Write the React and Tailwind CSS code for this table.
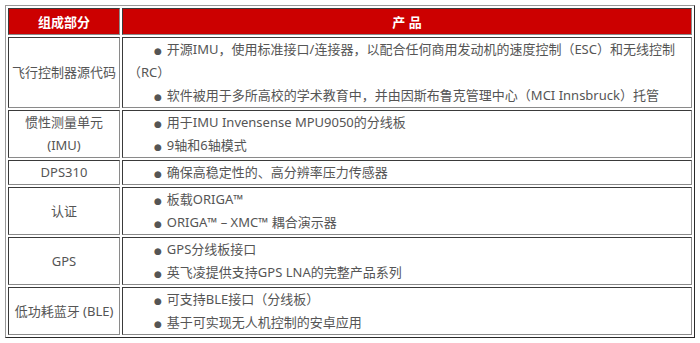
import React from 'react';

const rows = [
  {
    name: ['飞行控制器源代码'],
    h: 'h-[70px]',
    items: [
      ['开源IMU，使用标准接口/连接器，以配合任何商用发动机的速度控制（ESC）和无线控制', '（RC）'],
      ['软件被用于多所高校的学术教育中，并由因斯布鲁克管理中心（MCI Innsbruck）托管'],
    ],
  },
  {
    name: ['惯性测量单元', '(IMU)'],
    h: 'h-[47px]',
    items: [['用于IMU Invensense MPU9050的分线板'], ['9轴和6轴模式']],
  },
  {
    name: ['DPS310'],
    h: 'h-[25px]',
    items: [['确保高稳定性的、高分辨率压力传感器']],
  },
  {
    name: ['认证'],
    h: 'h-[47px]',
    items: [['板载ORIGA™'], ['ORIGA™ – XMC™ 耦合演示器']],
  },
  {
    name: ['GPS'],
    h: 'h-[48px]',
    items: [['GPS分线板接口'], ['英飞凌提供支持GPS LNA的完整产品系列']],
  },
  {
    name: ['低功耗蓝牙 (BLE)'],
    h: 'h-[48px]',
    items: [['可支持BLE接口（分线板）'], ['基于可实现无人机控制的安卓应用']],
  },
];

const cell = 'border border-t-[#3a3a3a] border-l-[#3a3a3a] border-r-[#8a8a8a] border-b-[#8a8a8a] p-0';

const Bullet = () => (
  <span className="leading-none text-[9px] text-[#555] mr-[5px] font-['DejaVu_Sans']">●</span>
);

export default function App() {
  return (
    <div className="w-[700px] h-[343px] bg-white pl-[5px] pt-[5px] font-['Noto_Sans','Noto_Sans_CJK_SC',sans-serif] text-[13px] text-[#555]">
      <table className="table-fixed w-[690px] border-separate border-spacing-[2px] border border-t-[#999] border-l-[#999] border-r-[#2a2a2a] border-b-[#2a2a2a]">
        <colgroup>
          <col className="w-[112px]" />
          <col />
        </colgroup>
        <tbody>
          <tr className="h-[27px]">
            <td className={`${cell} bg-[#cc0000] text-white font-bold text-center leading-[20px]`}>组成部分</td>
            <td className={`${cell} bg-[#cc0000] text-white font-bold text-center leading-[20px]`}>产 品</td>
          </tr>
          {rows.map((r, i) => (
            <tr key={i} className={r.h}>
              <td className={`${cell} text-center align-middle leading-[23px]`}>
                {r.name.map((n, j) => (
                  <div key={j}>{n}</div>
                ))}
              </td>
              <td className={`${cell} align-middle pl-[5px] leading-[23px]`}>
                {r.items.map((it, j) => (
                  <p key={j} className="indent-[26px]">
                    <Bullet />
                    {it[0]}
                    {it[1] && (
                      <>
                        <br />
                        {it[1]}
                      </>
                    )}
                  </p>
                ))}
              </td>
            </tr>
          ))}
        </tbody>
      </table>
    </div>
  );
}
